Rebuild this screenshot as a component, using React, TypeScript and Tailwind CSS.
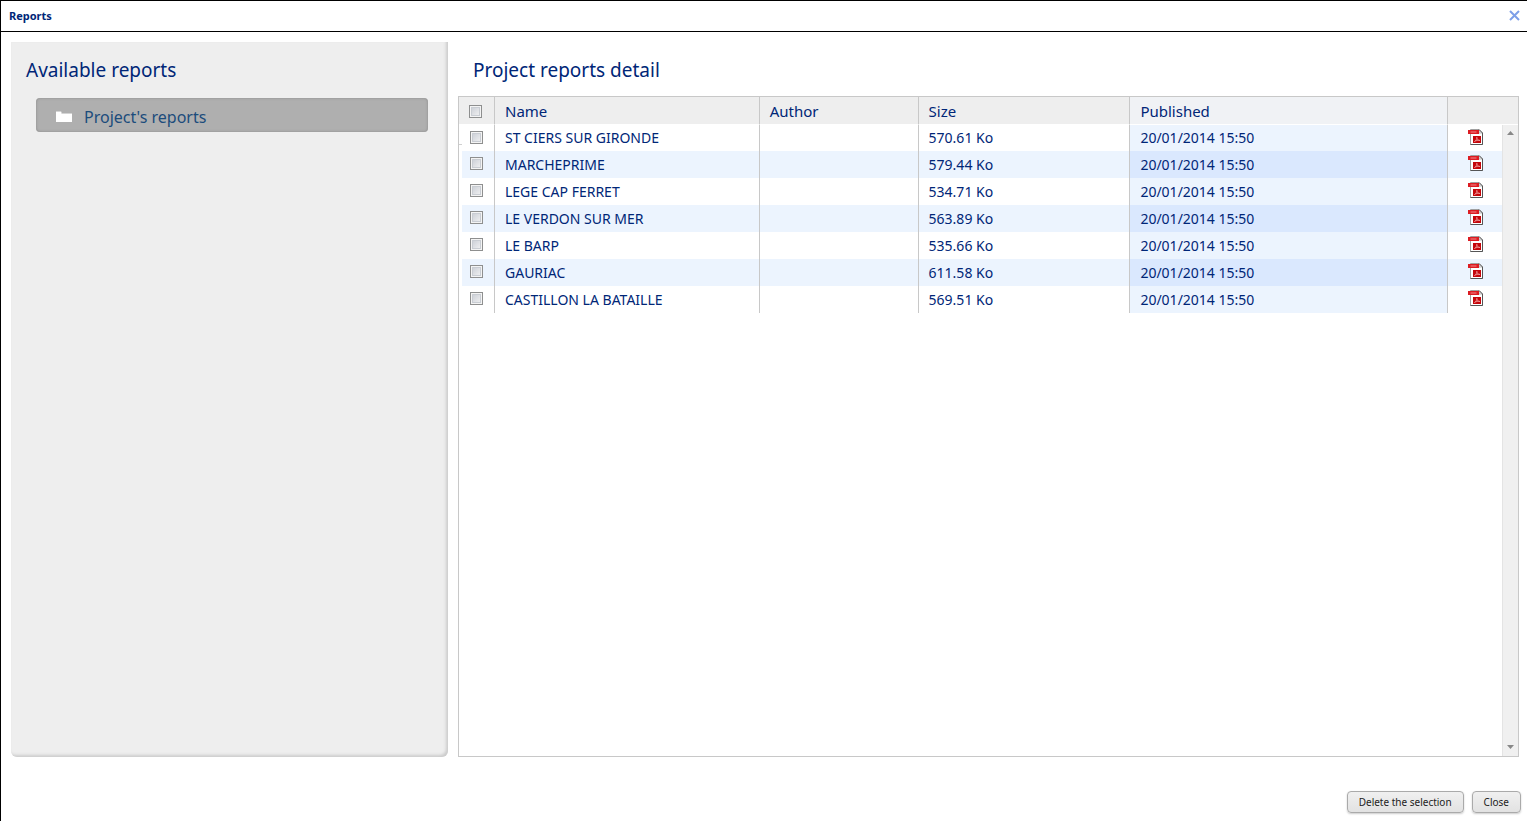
import React from 'react'

const reports = [
  { id: 1, name: 'ST CIERS SUR GIRONDE', author: '', size: '570.61 Ko', published: '20/01/2014 15:50' },
  { id: 2, name: 'MARCHEPRIME', author: '', size: '579.44 Ko', published: '20/01/2014 15:50' },
  { id: 3, name: 'LEGE CAP FERRET', author: '', size: '534.71 Ko', published: '20/01/2014 15:50' },
  { id: 4, name: 'LE VERDON SUR MER', author: '', size: '563.89 Ko', published: '20/01/2014 15:50' },
  { id: 5, name: 'LE BARP', author: '', size: '535.66 Ko', published: '20/01/2014 15:50' },
  { id: 6, name: 'GAURIAC', author: '', size: '611.58 Ko', published: '20/01/2014 15:50' },
  { id: 7, name: 'CASTILLON LA BATAILLE', author: '', size: '569.51 Ko', published: '20/01/2014 15:50' }
]

function Checkbox({ label }: { label: string }) {
  return (
    <input
      type="checkbox"
      aria-label={label}
      className="block size-[13px] appearance-none border border-[#8e8f8f] bg-linear-to-br from-[#c6cad2] to-[#f6f6f6] shadow-[inset_0_0_0_1px_#f4f4f4,inset_0_0_0_2px_#c9cdd3] checked:from-[#1c4587] checked:to-[#4b74b8]"
    />
  )
}

function FolderIcon() {
  return (
    <svg width="16" height="11" viewBox="0 0 16 11" aria-hidden="true">
      <path d="M0 1 H5 L6 3 H16 V11 H0 Z" fill="#fff" />
      <path d="M0 0.5 H5 L6 2.5 H16" fill="none" stroke="#d4d4d4" />
    </svg>
  )
}

function PdfIcon() {
  return (
    <svg width="16" height="17" viewBox="0 0 16 17" aria-hidden="true">
      <path d="M2.5 0.5 H11 L14.5 4 V15.5 H2.5 Z" fill="#fff" stroke="#a0a0a0" />
      <path d="M11 1 V4 H14" fill="#eee" stroke="#bbb" />
      <path d="M11 0.5 L14.5 4 V15.5 H2.5" fill="none" stroke="#555" />
      <rect x="0" y="1" width="11" height="4" fill="#dc1c22" />
      <path d="M2.5 3 H8.5" stroke="#f08a8c" strokeWidth="1" />
      <rect x="5" y="7" width="8" height="7" fill="#c4060b" />
      <path d="M6.5 12.5 C8.5 11 9 9.5 8.8 8.3 C9 10.5 10 11.3 12 11.5 C10 11 8 11.5 6.5 12.5" fill="none" stroke="#f3a0a0" strokeWidth="0.8" />
    </svg>
  )
}

function ScrollBar() {
  return (
    <div className="absolute top-7 right-0 bottom-0 flex w-4 flex-col items-center justify-between border-l border-[#e4e4e4] bg-[#f0f0f0] py-1.5">
      <svg width="7" height="5" viewBox="0 0 7 5" aria-hidden="true">
        <path d="M3.5 0 L7 4 H0 Z" fill="#888" />
      </svg>
      <svg width="7" height="5" viewBox="0 0 7 5" aria-hidden="true">
        <path d="M0 0 H7 L3.5 4 Z" fill="#888" />
      </svg>
    </div>
  )
}

function ReportsTable() {
  const th = 'border-r border-b border-r-[#c8c8c8] border-b-white px-2.5 pt-0.5 text-left font-normal'
  const td = 'border-r border-[#c8c8c8] px-2.5'

  return (
    <div className="relative min-h-0 flex-1 overflow-hidden border border-[#c8c8c8]">
      <table className="w-full table-fixed border-separate border-spacing-0 whitespace-nowrap">
        <colgroup>
          <col className="w-9" />
          <col className="w-[25%]" />
          <col className="w-[15%]" />
          <col className="w-[20%]" />
          <col className="w-[30%]" />
          <col />
        </colgroup>
        <thead className="bg-[#eee] text-[15px]">
          <tr className="h-7">
            <th className="border-r border-b border-r-[#c8c8c8] border-b-white pt-0.5 pl-2.5">
              <Checkbox label="Select all reports" />
            </th>
            <th className={th}>Name</th>
            <th className={th}>Author</th>
            <th className={th}>Size</th>
            <th className={`${th} bg-[#f0f2f5]`}>Published</th>
            <th className="border-b border-white" aria-label="File" />
          </tr>
        </thead>
        <tbody className="text-sm">
          {reports.map((report) => (
            <tr key={report.id} className="group h-[27px] first:h-[26px] even:bg-[#ecf4fe]">
              <td className="border-r border-l-3 border-r-[#c8c8c8] border-l-white pb-0.5 pl-2">
                <Checkbox label={report.name} />
              </td>
              <td className={td}>{report.name}</td>
              <td className={td}>{report.author}</td>
              <td className={td}>{report.size}</td>
              <td className={`${td} bg-[#ecf4fe] group-even:bg-[#dae8fe]`}>{report.published}</td>
              <td className="pb-0.5 pl-5">
                <a href="#" aria-label={`Open ${report.name}`} className="block w-4">
                  <PdfIcon />
                </a>
              </td>
            </tr>
          ))}
        </tbody>
      </table>
      <div className="absolute top-[47px] left-0 h-px w-[3px] bg-[#d0d0d0]" />
      <ScrollBar />
    </div>
  )
}

export default function App() {
  const button =
    'h-[22px] rounded-[4px] border border-[#aaa] bg-linear-to-b from-[#f0f0f0] to-[#e2e2e2] px-[11px] text-[10px] leading-4 text-[#222] shadow-[0_1px_2px_#ccc]'

  return (
    <div className="flex h-screen flex-col border-t border-l border-black bg-white font-['Noto_Sans',sans-serif] text-[#002677]">
      <header className="flex h-[31px] shrink-0 items-center justify-between border-b border-black pr-[7px] pl-2">
        <h1 className="text-[11px] font-bold">Reports</h1>
        <button aria-label="Close window" className="pb-px text-[#7d9fe8]">
          <svg width="11" height="11" viewBox="0 0 11 11" fill="none" stroke="currentColor" strokeWidth="2" aria-hidden="true">
            <path d="M1 1 L10 10 M10 1 L1 10" />
          </svg>
        </button>
      </header>

      <main className="flex min-h-0 flex-1 gap-2.5 pt-2.5 pr-2 pl-2.5">
        <aside className="w-[437px] shrink-0 rounded-b-md bg-[#eee] pr-5 pl-[15px] shadow-[inset_-2px_-2px_3px_#ccc]">
          <h2 className="pt-3 text-[19px] leading-8">Available reports</h2>
          <button className="mt-3 ml-2.5 flex h-[34px] w-[392px] items-center gap-3 rounded-[4px] bg-[#afafaf] pt-[3px] pl-5 text-base text-[#1c4c7c] shadow-[inset_0_0_3px_#888]">
            <FolderIcon />
            Project's reports
          </button>
        </aside>
        <section className="flex min-w-0 flex-1 flex-col">
          <h2 className="h-[54px] shrink-0 pt-3 pl-[15px] text-[19px] leading-8">Project reports detail</h2>
          <ReportsTable />
        </section>
      </main>

      <footer className="flex h-16 shrink-0 items-end justify-end gap-2 pr-1.5 pb-2">
        <button className={button}>Delete the selection</button>
        <button className={button}>Close</button>
      </footer>
    </div>
  )
}
